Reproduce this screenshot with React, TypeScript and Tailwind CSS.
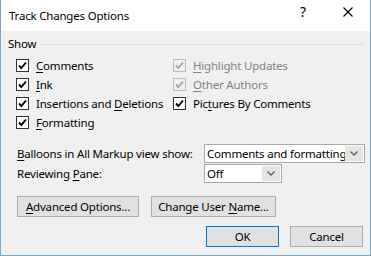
import React from "react";

const font = { fontFamily: '"Segoe UI", "Noto Sans", "Open Sans", sans-serif' };

function Check({ disabled }: { disabled?: boolean }) {
  return (
    <span
      className={
        "flex h-[13px] w-[13px] shrink-0 items-center justify-center border " +
        (disabled ? "border-[#bcbcbc] bg-[#f0f0f0]" : "border-[#333333] bg-white")
      }
    >
      <svg width="11" height="11" viewBox="0 0 11 11">
        <path
          d="M2 5.5 L4.3 8 L9 2.5"
          fill="none"
          stroke={disabled ? "#a6a6a6" : "#000000"}
          strokeWidth="1.9"
        />
      </svg>
    </span>
  );
}

function Option({
  pre,
  key_,
  post,
  disabled,
}: {
  pre?: string;
  key_: string;
  post: string;
  disabled?: boolean;
}) {
  return (
    <div className="flex h-[19px] items-center">
      <Check disabled={disabled} />
      <span className={"ml-[7px] whitespace-nowrap " + (disabled ? "text-[#838383]" : "text-black")}>
        {pre}
        <u className="underline-offset-2">{key_}</u>
        {post}
      </span>
    </div>
  );
}

function Combo({ value, width }: { value: string; width: string }) {
  return (
    <div className={"flex h-[19px] shrink-0 items-center border border-[#a9a9a9] bg-white " + width}>
      <span className="flex-1 overflow-hidden whitespace-nowrap pl-[2px] text-black">{value}</span>
      <span className="mr-[1px] flex h-[15px] w-[18px] shrink-0 items-center justify-center bg-[#e5e5e5]">
        <svg width="8" height="5" viewBox="0 0 8 5">
          <path d="M0.5 0.5 L4 4 L7.5 0.5" fill="none" stroke="#606060" strokeWidth="1.3" />
        </svg>
      </span>
    </div>
  );
}

function Button({
  children,
  width,
  primary,
}: {
  children: React.ReactNode;
  width: string;
  primary?: boolean;
}) {
  return (
    <button
      className={
        "flex h-[21px] shrink-0 items-center justify-center whitespace-nowrap border bg-[#e1e1e1] text-black " +
        (primary ? "border-[#0078d7] " : "border-[#adadad] ") +
        width
      }
    >
      {children}
    </button>
  );
}

export default function App() {
  return (
    <div
      className="flex h-[256px] w-[371px] flex-col overflow-hidden border-x border-b border-[#7aa3d5] bg-[#f0f0f0] text-[11.5px] leading-[16px] tracking-[-0.2px]"
      style={font}
    >
      <div className="flex h-[31px] shrink-0 bg-white">
        <span className="self-center whitespace-nowrap pl-[8px] text-black">Track Changes Options</span>
        <div className="ml-auto flex items-start pt-[4px]">
          <span className="text-[14px] leading-[16px] text-black">?</span>
          <svg className="ml-[37px] mr-[17px] mt-[3px]" width="10" height="10" viewBox="0 0 10 10">
            <path d="M0.5 0.5 L9.5 9.5 M9.5 0.5 L0.5 9.5" stroke="#000" strokeWidth="1.1" />
          </svg>
        </div>
      </div>

      <div className="mt-[5px] flex h-[16px] items-center pl-[7px] pr-[6px]">
        <span className="text-black">Show</span>
        <div className="ml-[5px] h-px flex-1 bg-[#dcdcdc]" />
      </div>

      <div className="mt-[4px] grid grid-cols-[157px_1fr] pl-[15px]">
        <Option key_="C" post="omments" />
        <Option key_="H" post="ighlight Updates" disabled />
        <Option key_="I" post="nk" />
        <Option key_="O" post="ther Authors" disabled />
        <Option pre="Insertions and " key_="D" post="eletions" />
        <Option pre="Pic" key_="t" post="ures By Comments" />
        <Option key_="F" post="ormatting" />
      </div>

      <div className="mt-[12px] flex items-center pl-[16px]">
        <span className="w-[187px] shrink-0 whitespace-nowrap text-black">
          <u className="underline-offset-2">B</u>alloons in All Markup view show:
        </span>
        <Combo value="Comments and formatting" width="w-[161px]" />
      </div>

      <div className="mt-[1px] flex items-center pl-[16px]">
        <span className="w-[187px] shrink-0 whitespace-nowrap text-black">
          Reviewing <u className="underline-offset-2">P</u>ane:
        </span>
        <Combo value="Off" width="w-[78px]" />
      </div>

      <div className="mt-[13px] flex gap-[12px] pl-[16px]">
        <Button width="w-[122px]">
          <span>
            <u className="underline-offset-2">A</u>dvanced Options...
          </span>
        </Button>
        <Button width="w-[125px]">
          <span>
            Change User <u className="underline-offset-2">N</u>ame...
          </span>
        </Button>
      </div>

      <div className="mt-[9px] flex justify-end gap-[11px] pr-[7px]">
        <Button width="w-[73px]" primary>
          OK
        </Button>
        <Button width="w-[73px]">Cancel</Button>
      </div>
    </div>
  );
}
